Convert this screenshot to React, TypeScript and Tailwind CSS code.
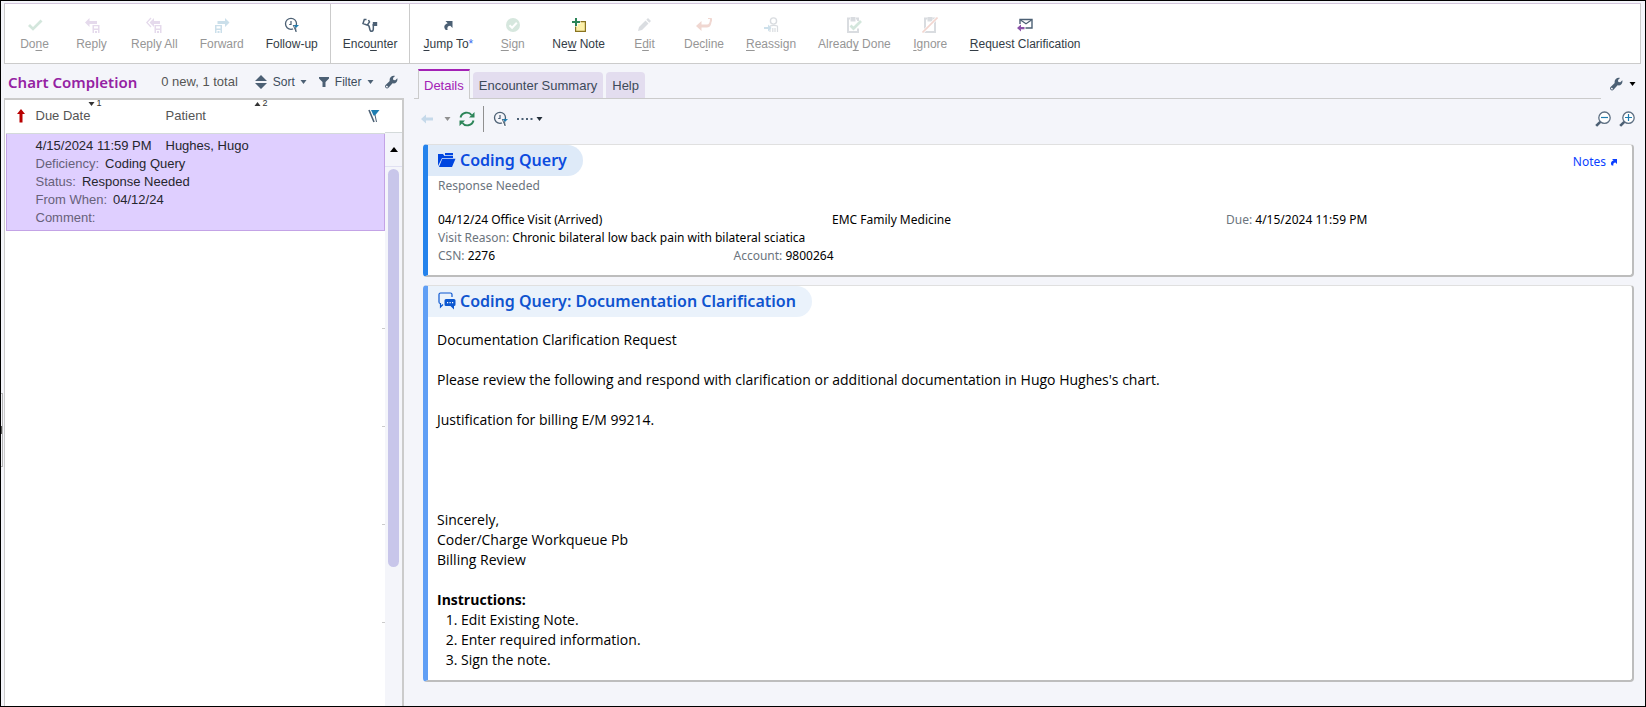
import type { ReactNode } from "react";

type IconName =
  | "done" | "reply" | "replyAll" | "forward" | "followUp" | "encounter" | "jump" | "sign"
  | "newNote" | "edit" | "decline" | "reassign" | "already" | "ignore" | "request";

const SLATE = "#4c6074";

function Svg({ children, w = 16, h = 16 }: { children: ReactNode; w?: number; h?: number }) {
  return (
    <svg width={w} height={h} viewBox={`0 0 ${w} ${h}`} fill="none" aria-hidden="true" className="shrink-0">
      {children}
    </svg>
  );
}

function ClockFlag() {
  return (
    <Svg>
      <circle cx="7" cy="6.800" r="5.500" stroke={SLATE} strokeWidth="1.300" />
      <path d="M7 4v3.500H5.200" stroke={SLATE} strokeWidth="1.200" />
      <path d="M8.800 8.500l4 7" stroke="#fff" strokeWidth="3" />
      <path d="M9.500 8h5.500l-3 3z" fill="#1f7db0" />
      <path d="M9.200 8l3 7M11.500 10.500l.6 4" stroke={SLATE} strokeWidth="1" />
    </Svg>
  );
}

function JumpArrow({ color = SLATE }: { color?: string }) {
  return (
    <Svg w={8} h={8}>
      <path d="M2 1h5v5L5.400 4.400C3.800 4.500 3 5.500 3.400 7.500H1.800C.3 5.500 1 3.200 3.600 2.500z" fill={color} />
    </Svg>
  );
}

function Disk({ x, color }: { x: number; color: string }) {
  return (
    <path
      fillRule="evenodd"
      fill={color}
      d={`M${x} 8h7v8h-7zM${x + 1.5} 9.200v2.300h4v-2.300zM${x + 1.5} 13v3h1v-2h2v2h1v-3z`}
    />
  );
}

function ToolIcon({ name }: { name: IconName }) {
  switch (name) {
    case "done":
      return <Svg><path d="M1 9l2-2 3 3 7.500-7.500 2 2L6 13.800z" fill="#d3e6dc" /></Svg>;
    case "reply":
      return <Svg><path d="M1 5.500L5.500 1v3H13v3H5.500v3z" fill="#e5daec" /><Disk x={8.5} color="#e5daec" /></Svg>;
    case "replyAll":
      return (
        <Svg>
          <path d="M3.500 5.500L8 1v3h6v3H8v3z" fill="#e5daec" />
          <path d="M5 1L.8 5.500 5 10" stroke="#e5daec" strokeWidth="1.300" />
          <Disk x={8.5} color="#e5daec" />
        </Svg>
      );
    case "forward":
      return <Svg><path d="M15.500 5.500L11 1v3H3.500v3H11v3z" fill="#cbdfea" /><Disk x={1} color="#cbdfea" /></Svg>;
    case "followUp":
      return <ClockFlag />;
    case "encounter":
      return (
        <Svg>
          <path d="M4.500 2.500H2.300L1 6.500l4.200 1.600L7.500 5 6.500 3" stroke={SLATE} strokeWidth="1.500" />
          <path d="M5.500 8c3.200.3 1 6.300 4 6.300 2.400 0 1.800-2.800 1.800-7.300" stroke={SLATE} strokeWidth="1.500" />
          <path d="M10.800 5h4.400v4h-4.400z" fill={SLATE} />
        </Svg>
      );
    case "jump":
      return <Svg><path d="M5.500 4h7v7l-2.200-2.300C8 8.700 6.800 10.200 7.600 13H5.800C3.300 10.500 4 7.300 7.700 6.200z" fill={SLATE} /></Svg>;
    case "sign":
      return (
        <Svg>
          <circle cx="8" cy="8" r="7" fill="#d6e7de" />
          <path d="M4.500 8.200l2.600 2.600 4.700-5" stroke="#fff" strokeWidth="2" />
        </Svg>
      );
    case "newNote":
      return (
        <Svg>
          <path d="M4.600 4.600h9.800v9.800H4.600z" fill="#fdf0a8" stroke="#8a7420" strokeWidth="1.200" />
          <path d="M5 .5v9M.8 5h8.700" stroke="#fff" strokeWidth="3.400" />
          <path d="M5 1v8M1 5h8" stroke="#2c8558" strokeWidth="2" />
        </Svg>
      );
    case "edit":
      return <Svg><path d="M2 14l1-4 6.500-6.500 3 3L6 13zM10.300 2.700L12 1l3 3-1.700 1.700z" fill="#dadde1" /></Svg>;
    case "decline":
      return (
        <Svg>
          <path d="M0 9l5.500-5v3.500H11c2 0 3-2 3-6h1.500c.4 6-1.200 9-4.500 9H5.500V14z" fill="#f0d7d1" />
          <path d="M12 1.500h3.500v3" stroke="#f0d7d1" strokeWidth="1" />
        </Svg>
      );
    case "reassign":
      return (
        <Svg>
          <circle cx="10.500" cy="4" r="3.100" stroke="#d9dce0" strokeWidth="1.400" />
          <path d="M7 15V9.500c0-1.500 7.500-1.500 7.500 0V15M9.800 15v-4M12 15v-4" stroke="#d9dce0" strokeWidth="1.200" />
          <path d="M1 10h4V7.500L8.500 11 5 14.500V12H1z" fill="#cde0eb" />
        </Svg>
      );
    case "already":
      return (
        <Svg>
          <path d="M4 1.500H2V15h10v-3.500M10 1.500h2V4" stroke="#d9dce0" strokeWidth="2" />
          <path d="M4.500 0h5v4.500h-5z" fill="#d9dce0" />
          <path d="M4.500 8.500l3 3 7.500-7.500" stroke="#d3e6dc" strokeWidth="2.800" />
        </Svg>
      );
    case "ignore":
      return (
        <Svg>
          <path d="M5.500 1.500H3V15h10V1.500h-2.500" stroke="#d9dce0" strokeWidth="2" />
          <path d="M5.500 0h5v4.500h-5z" fill="#d9dce0" />
          <path d="M.5 15.500L15.500.5" stroke="#fff" strokeWidth="3" />
          <path d="M.5 15.500L15.500.5" stroke="#f2d6d0" strokeWidth="1.600" />
        </Svg>
      );
    case "request":
      return (
        <Svg>
          <path d="M3 7V2.500h12v8.500H8.500" stroke={SLATE} strokeWidth="1.400" />
          <path d="M3.500 3L9 6.800 14.500 3" stroke={SLATE} strokeWidth="1.200" />
          <path d="M0 11l4-3.500v2.400h3.500v2.300H4v2.400z" fill="#8b52a8" />
        </Svg>
      );
  }
}

function Caret({ color = SLATE }: { color?: string }) {
  return <Svg w={7} h={4}><path d="M.5 0h6l-3 4z" fill={color} /></Svg>;
}

function Wrench() {
  return (
    <Svg w={14} h={14}>
      <path fillRule="evenodd" fill={SLATE} d="M11 .9L9 3l.3 2 2 .3 2-2c.7 3-1.500 5.700-4.700 5L4.500 12.800c-1.900 1.900-4.800-.9-2.900-2.900L5.700 6C5 2.800 7.800 0 11 .9zM2.500 10.800a.9.9 0 1 0 1.300 1 .9.9 0 0 0-1.300-1z" />
    </Svg>
  );
}

function Magnifier({ plus }: { plus?: boolean }) {
  return (
    <Svg>
      <circle cx="9.500" cy="6.700" r="5.700" stroke="#5d6f82" strokeWidth="1.300" fill="#fff" />
      <path d="M5.300 10.800L1.200 14.900" stroke={SLATE} strokeWidth="2.600" />
      <path d={plus ? "M6 6.500h7M9.500 3v7" : "M6 6.500h7"} stroke="#1f7db0" strokeWidth="1.200" />
    </Svg>
  );
}

interface Tool {
  icon: IconName;
  label: ReactNode;
  off?: boolean;
}

const groups: Tool[][] = [
  [
    { icon: "done", label: <>Do<u>n</u>e</>, off: true },
    { icon: "reply", label: "Reply", off: true },
    { icon: "replyAll", label: "Reply All", off: true },
    { icon: "forward", label: "Forward", off: true },
    { icon: "followUp", label: "Follow-up" },
  ],
  [{ icon: "encounter", label: <>Enco<u>u</u>nter</> }],
  [
    { icon: "jump", label: <><u>J</u>ump To<span className="text-[#3b6cf0]">*</span></> },
    { icon: "sign", label: <><u>S</u>ign</>, off: true },
    { icon: "newNote", label: <>Ne<u>w</u> Note</> },
    { icon: "edit", label: <>E<u>d</u>it</>, off: true },
    { icon: "decline", label: <>Dec<u>l</u>ine</>, off: true },
    { icon: "reassign", label: <><u>R</u>eassign</>, off: true },
    { icon: "already", label: <>Alread<u>y</u> Done</>, off: true },
    { icon: "ignore", label: <><u>I</u>gnore</>, off: true },
    { icon: "request", label: <><u>R</u>equest Clarification</> },
  ],
];

function Toolbar() {
  return (
    <header className="mr-1 flex h-[61px] border border-t-[#d3c6dc] border-[#cbcbcb] bg-white">
      {groups.map((group, i) => (
        <div key={i} className={i < 2 ? "flex border-r border-[#cbcbcb] px-px" : "flex px-[2px]"}>
          {group.map((tool) => (
            <button
              key={tool.icon}
              type="button"
              disabled={tool.off}
              className={`flex min-w-[57px] flex-col items-center gap-[3px] px-[11px] pt-[13px] text-[12px] leading-4 whitespace-nowrap underline-offset-2 ${tool.off ? "text-[#969696]" : "text-[#333c46]"}`}
            >
              <ToolIcon name={tool.icon} />
              <span>{tool.label}</span>
            </button>
          ))}
        </div>
      ))}
    </header>
  );
}

const details = [
  ["Deficiency:", "Coding Query"],
  ["Status:", "Response Needed"],
  ["From When:", "04/12/24"],
  ["Comment:", ""],
];

function Worklist() {
  return (
    <section className="flex w-[400px] shrink-0 flex-col">
      <div className="flex h-[34px] items-center pt-[2px] pl-1 text-[12px] text-[#3d4c5c]">
        <h1 className="font-['Noto_Sans','Open_Sans',sans-serif] text-[15px] font-semibold text-[#9422a3]">Chart Completion</h1>
        <span className="ml-6 text-[13px] text-[#555]">0 new, 1 total</span>
        <button type="button" className="ml-4 flex items-center gap-[5px]">
          <Svg w={14} h={16}><path d="M1 7l6-6 6 6zM1 9h12l-6 6z" fill={SLATE} /></Svg>
          <span>Sort</span>
          <Caret />
        </button>
        <button type="button" className="ml-[11px] flex items-center gap-[5px]">
          <Svg w={12} h={12}><path d="M1 1h10v1.500L7.500 6v5h-3V6L1 2.500z" fill={SLATE} /></Svg>
          <span>Filter</span>
          <Caret />
        </button>
        <button type="button" aria-label="Settings" className="ml-[10px]"><Wrench /></button>
      </div>
      <div className="flex flex-1 border-t-2 border-r-2 border-l border-[#cbcbcb] bg-white pl-px">
        <div className="flex min-w-0 flex-1 flex-col">
          <table className="w-full table-fixed border-collapse text-left text-[13px] leading-[18px]">
            <colgroup>
              <col className="w-[29px]" />
              <col className="w-[130px]" />
              <col />
              <col className="w-[18px]" />
            </colgroup>
            <thead>
              <tr className="h-[33px] border-b border-[#d4dada] text-[#555]">
                <th className="pl-[10px]">
                  <Svg w={8} h={14}><path d="M4 0l4 5H5.500v8.500h-3V5H0z" fill="#b80000" /></Svg>
                </th>
                <th className="relative font-normal">
                  <span>Due Date</span>
                  <span className="absolute top-0 left-[52px] flex items-center gap-[2px] text-[9px] leading-[7px] text-[#333]">
                    <Caret color="#333" />1
                  </span>
                </th>
                <th className="relative font-normal">
                  <span>Patient</span>
                  <span className="absolute top-0 left-[88px] flex items-center gap-[2px] text-[9px] leading-[7px] text-[#333]">
                    <Svg w={7} h={4}><path d="M.5 4h6l-3-4z" fill="#333" /></Svg>2
                  </span>
                </th>
                <th>
                  <Svg w={14} h={14}>
                    <path d="M4 1h8.500L8 6.500H6.500z" fill="#1f7db0" />
                    <path d="M2 1l5 12" stroke={SLATE} strokeWidth="1.600" />
                    <path d="M8 6l1.500 7" stroke={SLATE} strokeWidth="1" />
                  </Svg>
                </th>
              </tr>
            </thead>
            <tbody className="border border-[#c3a3e6] bg-[#dfcfff] text-[#26262e]">
              <tr>
                <td className="pt-[3px]" />
                <td className="pt-[3px] whitespace-nowrap">4/15/2024 11:59 PM</td>
                <td className="pt-[3px]" colSpan={2}>Hughes, Hugo</td>
              </tr>
              {details.map(([label, value], i) => (
                <tr key={label}>
                  <td />
                  <td colSpan={3} className={i === 3 ? "pb-[3px]" : ""}>
                    <span className="mr-[6px] text-[#67617a]">{label}</span>
                    {value}
                  </td>
                </tr>
              ))}
            </tbody>
          </table>
          {[0, 1, 2, 3].map((n) => (
            <div key={n} className="h-[98px] w-[3px] self-end border-b border-[#cbcbcb]" />
          ))}
        </div>
        <div className="flex w-[17px] flex-col bg-[#f4f5fa]">
          <div className="h-[33px] border-b border-[#d4dada] bg-white" />
          <button type="button" aria-label="Scroll up" className="flex h-[34px] items-center justify-center border-b border-[#e0e0f2]">
            <Svg w={8} h={5}><path d="M0 5h8L4 0z" fill="#000" /></Svg>
          </button>
          <div className="mx-[3px] mt-[2px] h-[398px] rounded-full bg-[#c8c6ea]" />
        </div>
      </div>
    </section>
  );
}

function Card({ bar, pill, icon, title, titleColor, children, action }: {
  bar: string; pill: string; icon: ReactNode; title: string; titleColor: string; children: ReactNode; action?: ReactNode;
}) {
  return (
    <article className={`rounded-sm border-t border-r-2 border-b-2 border-l-[5px] border-t-[#e0e0e0] border-r-[#bdbdbd] border-b-[#bdbdbd] bg-white ${bar}`}>
      <div className="flex items-start justify-between">
        <div className={`flex h-[31px] items-center gap-1 rounded-r-full pr-4 pb-px pl-[10px] ${pill}`}>
          {icon}
          <h2 className={`text-[16px] leading-6 font-semibold ${titleColor}`}>{title}</h2>
        </div>
        {action}
      </div>
      {children}
    </article>
  );
}

function Field({ label, value }: { label?: string; value: string }) {
  return (
    <div>
      {label && <span className="text-[#6b747d]">{label} </span>}
      {value}
    </div>
  );
}

function DetailTools() {
  return (
    <div className="flex h-[45px] items-center pr-[10px] pb-[6px] pl-[6px]">
      <button type="button" aria-label="Back" disabled>
        <Svg w={14} h={12}><path d="M1 6l5-4.500v3h7v3H6v3z" fill="#c5d9ea" /></Svg>
      </button>
      <button type="button" aria-label="History" className="ml-[10px]"><Caret color="#909090" /></button>
      <button type="button" aria-label="Refresh" className="ml-2">
        <Svg w={16} h={16}>
          <path d="M1.500 6.500C3 .8 10 .3 12.500 4M14.500 9.500C13 15.200 6 15.700 3.500 12" stroke="#2c8558" strokeWidth="1.900" />
          <path d="M15.500 1v5.500H10zM.5 15V9.500H6z" fill="#2c8558" />
        </Svg>
      </button>
      <div className="mr-[9px] ml-2 h-[26px] border-l border-[#909090]" />
      <button type="button" aria-label="Follow-up"><ClockFlag /></button>
      <button type="button" aria-label="More" className="ml-2 flex items-center gap-[3px]">
        <Svg w={16} h={4}>
          <path d="M0 1h2v2H0zM4.500 1h2v2h-2zM9 1h2v2H9zM13.500 1h2v2h-2z" fill={SLATE} />
        </Svg>
        <Caret color="#222d38" />
      </button>
      <div className="ml-auto flex gap-2">
        <button type="button" aria-label="Zoom out"><Magnifier /></button>
        <button type="button" aria-label="Zoom in"><Magnifier plus /></button>
      </div>
    </div>
  );
}

export default function App() {
  return (
    <div className="relative flex min-h-screen flex-col border border-black bg-[#f4f5fa] pt-[2px] pl-[3px] font-['Liberation_Sans',Arial,sans-serif]">
      <div className="absolute top-[392px] left-0 flex h-[74px] w-[2px] items-center border-y border-r border-[#b5b5b5]">
        <div className="h-2 w-px bg-[#555]" />
      </div>
      <Toolbar />
      <div className="flex flex-1">
        <Worklist />
        <main className="flex min-w-0 flex-1 flex-col pl-[10px]">
          <div className="flex h-[35px] items-end pr-[9px]">
            <nav className="flex flex-1 items-end gap-[3px] border-b border-[#cbcbcb] pl-1 text-[13px] text-[#3d4a5a]" role="tablist">
              <button type="button" role="tab" aria-selected="true" className="-mb-px h-[30px] border-x border-t-2 border-x-[#cbcbcb] border-t-[#a322b5] bg-[#f4f5fa] px-[5px] pt-px text-[#a322b5]">Details</button>
              <button type="button" role="tab" aria-selected="false" className="h-[26px] rounded-t-sm bg-[#e3ddef] px-[6px] pt-[2px]">Encounter Summary</button>
              <button type="button" role="tab" aria-selected="false" className="h-[26px] rounded-t-sm bg-[#e3ddef] px-[6px] pt-[2px]">Help</button>
            </nav>
            <button type="button" aria-label="Configure" className="flex items-center gap-[6px] self-center pt-1 pl-2">
              <Wrench />
              <Caret color="#000" />
            </button>
          </div>
          <DetailTools />
          <div className="flex flex-col gap-2 pr-[11px] pl-[9px] font-['Noto_Sans','Open_Sans',sans-serif] text-[12px] leading-[18px] text-black">
            <Card
              bar="border-l-[#2583ec]"
              pill="bg-[#deeaf8]"
              titleColor="text-[#0b4bdf]"
              title="Coding Query"
              icon={
                <Svg w={18} h={16}>
                  <path d="M0 14V2h5l1.500 2H15v2H4zM7 1h8v2.200H7z" fill="#0046e0" />
                  <path d="M4.300 6.800H17.500L14 15H1z" fill="#0046e0" />
                </Svg>
              }
              action={
                <a href="#notes" className="flex items-center gap-1 pt-2 pr-[14px] text-[#0b3fff]">
                  Notes <JumpArrow color="#0b3fff" />
                </a>
              }
            >
              <div className="pt-px pr-[12px] pb-[10px] pl-[10px]">
                <div className="pb-4 text-[#6b747d]">Response Needed</div>
                <div className="grid grid-cols-3">
                  <Field value="04/12/24 Office Visit (Arrived)" />
                  <Field value="EMC Family Medicine" />
                  <Field label="Due:" value="4/15/2024 11:59 PM" />
                </div>
                <Field label="Visit Reason:" value="Chronic bilateral low back pain with bilateral sciatica" />
                <div className="grid grid-cols-4">
                  <Field label="CSN:" value="2276" />
                  <Field label="Account:" value="9800264" />
                </div>
              </div>
            </Card>
            <Card
              bar="border-l-[#609ff5]"
              pill="bg-[#eaf2fb]"
              titleColor="text-[#0f54cf]"
              title="Coding Query: Documentation Clarification"
              icon={
                <Svg w={18} h={18}>
                  <path d="M5 12.500L2.500 15v-3.500c-1 0-1.500-.5-1.500-1.500V2.500C1 1.500 1.500 1 2.500 1h10c1 0 1.500.5 1.500 1.500V5" stroke="#0b57d0" strokeWidth="1.200" />
                  <path d="M8 7h8a1.500 1.500 0 0 1 1.500 1.500v4A1.500 1.500 0 0 1 16 14v3.500L12.500 14H8a1.500 1.500 0 0 1-1.500-1.500v-4A1.500 1.500 0 0 1 8 7z" fill="#0b57d0" />
                  <path d="M9 10h1.200v1.200H9zM11.500 10h1.200v1.200h-1.200zM14 10h1.200v1.200H14z" fill="#fff" />
                </Svg>
              }
            >
              <div className="pt-[13px] pr-3 pb-[10px] pl-[9px] font-['Open_Sans','Noto_Sans',sans-serif] text-[14px] leading-5">
                <p>Documentation Clarification Request</p>
                <p className="mt-5">Please review the following and respond with clarification or additional documentation in Hugo Hughes's chart.</p>
                <p className="mt-5">Justification for billing E/M 99214.</p>
                <p className="mt-20">Sincerely,<br />Coder/Charge Workqueue Pb<br />Billing Review</p>
                <h3 className="mt-5 font-bold">Instructions:</h3>
                <ol className="list-decimal pl-6">
                  <li>Edit Existing Note.</li>
                  <li>Enter required information.</li>
                  <li>Sign the note.</li>
                </ol>
              </div>
            </Card>
          </div>
        </main>
      </div>
    </div>
  );
}
